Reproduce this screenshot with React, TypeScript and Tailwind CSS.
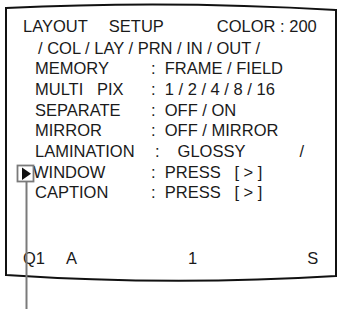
const rows: { label: string; value: string; labelClass?: string }[] = [
  { label: "MEMORY", value: ":  FRAME / FIELD" },
  { label: "MULTI   PIX", value: ":  1 / 2 / 4 / 8 / 16" },
  { label: "SEPARATE", value: ":  OFF / ON" },
  { label: "MIRROR", value: ":  OFF / MIRROR" },
  { label: "LAMINATION", value: "" },
  { label: "WINDOW", value: ":  PRESS   [ > ]", labelClass: "-ml-[2px]" },
  { label: "CAPTION", value: ":  PRESS   [ > ]" },
];

function Frame() {
  return (
    <svg className="pointer-events-none absolute inset-0" width="340" height="309" viewBox="0 0 340 309">
      <path
        d="M6 8 Q170 0 336 10 L336 276 Q171 286 6 275 Z"
        fill="none"
        stroke="#111"
        strokeWidth="2"
      />
      <rect x="17.5" y="165.5" width="16" height="16" fill="none" stroke="#7a7a7a" strokeWidth="1.8" />
      <path d="M22 167.5 L31 173.8 L22 180 Z" fill="#111" />
      <line x1="26.5" y1="182" x2="26.5" y2="309" stroke="#7a7a7a" strokeWidth="2" />
    </svg>
  );
}

export default function App() {
  return (
    <div className="relative h-[309px] w-[340px] overflow-hidden bg-white font-['Liberation_Sans',Arial,sans-serif] text-[16.5px] text-[#1a1a1a]">
      <div className="flex flex-col pt-[15px]">
        <div className="flex h-[22.6px] items-center whitespace-pre pl-[23px] leading-[20.7px]">
          <span>LAYOUT</span>
          <span className="ml-[21px]">SETUP</span>
          <span className="ml-[53px]">COLOR : 200</span>
        </div>
        <div className="h-[20.7px] whitespace-pre pl-[38px] leading-[20.7px]">/ COL / LAY / PRN / IN / OUT /</div>
        {rows.map((r) => (
          <div key={r.label} className="flex h-[20.7px] whitespace-pre pl-[35px] leading-[20.7px]">
            <span className={`w-[116px] shrink-0 ${r.labelClass ?? ""}`}>{r.label}</span>
            {r.label === "LAMINATION" ? (
              <span className="flex">
                <span className="ml-[4px]">:</span>
                <span className="ml-[18px]">GLOSSY</span>
                <span className="ml-[54px]">/</span>
              </span>
            ) : (
              <span className={r.labelClass ? "ml-[2px]" : ""}>{r.value}</span>
            )}
          </div>
        ))}
        <div className="mt-[45px] flex h-[20.7px] whitespace-pre pl-[23px] leading-[20.7px]">
          <span>Q1</span>
          <span className="ml-[21px]">A</span>
          <span className="ml-[111px]">1</span>
          <span className="ml-[110px]">S</span>
        </div>
      </div>
      <Frame />
    </div>
  );
}
